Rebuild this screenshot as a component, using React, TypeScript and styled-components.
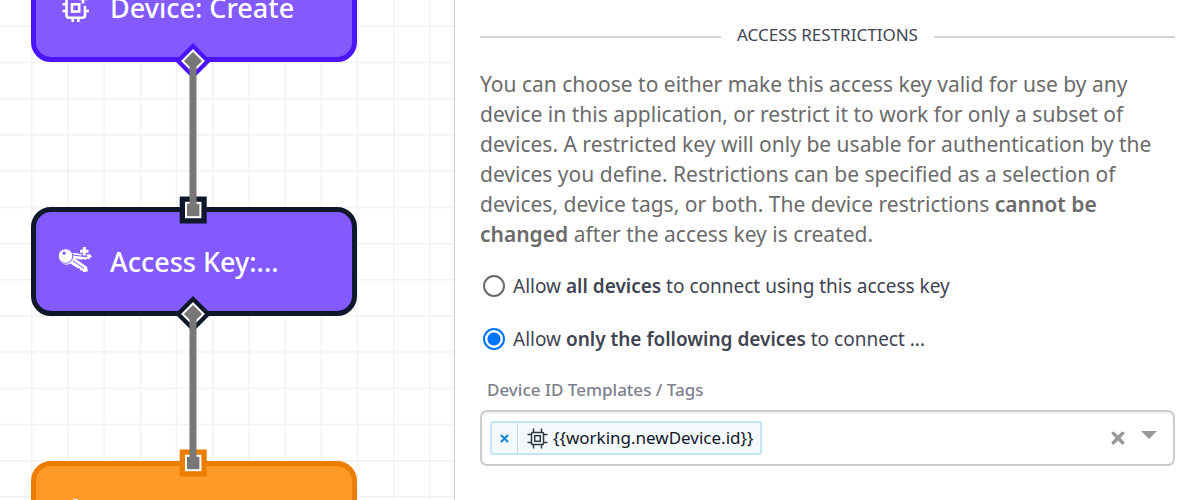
import React from "react";
import styled, { createGlobalStyle } from "styled-components";

const GlobalStyle = createGlobalStyle`
  * { box-sizing: border-box; }
  body { margin: 0; background: #fff; font-family: "Noto Sans", "Open Sans", sans-serif; color: #3f4452; }
  b { font-weight: 600; }
`;

const Layout = styled.div`
  display: flex;
  height: 100vh;
  overflow: hidden;
`;

const Canvas = styled.div`
  position: relative;
  flex: 0 0 455px;
  border-right: 1px solid #ccc;
  overflow: hidden;
`;

const Grid = styled.svg`
  position: absolute;
  inset: 0;
  width: 100%;
  height: 100%;
`;

const Node = styled.div<{ $top: number; $fill: string; $edge: string }>`
  position: absolute;
  left: 31px;
  top: ${(p) => p.$top}px;
  display: flex;
  align-items: center;
  width: 326px;
  height: 109px;
  padding: 0 22px;
  border: 5px solid ${(p) => p.$edge};
  border-radius: 20px;
  background: ${(p) => p.$fill};
  color: #fff;
`;

const NodeIcon = styled.svg`
  flex: none;
  width: 34px;
  height: 34px;
  margin-right: 18px;
`;

const NodeTitle = styled.span`
  font-size: 27px;
  font-weight: 500;
  line-height: 36px;
  white-space: nowrap;
`;

const Panel = styled.main`
  flex: 1;
  min-width: 0;
  padding: 20px 25px;
`;

const SectionTitle = styled.h2`
  display: flex;
  align-items: center;
  gap: 16px;
  margin: 0 0 19px;
  font-size: 17px;
  font-weight: 400;
  line-height: 30px;
  &::before,
  &::after {
    content: "";
    flex: 1;
    height: 2px;
    margin-top: 3px;
    background: #d4d4d6;
  }
`;

const Description = styled.p`
  margin: 0 0 22px;
  font-size: 21px;
  line-height: 30px;
  color: #6b6b6b;
`;

const Option = styled.label`
  display: flex;
  align-items: center;
  gap: 8px;
  height: 30px;
  margin-bottom: 23px;
  font-size: 19px;
  line-height: 30px;
`;

const Radio = styled.input`
  appearance: none;
  flex: none;
  width: 22px;
  height: 22px;
  margin: 0 0 0 3px;
  border: 2px solid #6b6b6b;
  border-radius: 50%;
  background: #fff;
  &:checked {
    border-color: #0075ff;
    background: radial-gradient(circle, #0075ff 6px, #fff 7px);
  }
`;

const FieldLabel = styled.label`
  display: block;
  margin: 0 0 7px 7px;
  font-size: 17px;
  font-weight: 500;
  line-height: 26px;
  color: #7c808c;
`;

const TagSelect = styled.div`
  display: flex;
  align-items: center;
  height: 56px;
  padding: 0 16px 0 8px;
  border: 2px solid #ccc;
  border-radius: 7px;
  box-shadow: inset 0 2px 2px #f2f2f2;
`;

const Tag = styled.span`
  display: flex;
  align-items: stretch;
  height: 34px;
  border: 2px solid #c2e4f4;
  border-radius: 3px;
  background: #f4f9fd;
  color: #111827;
`;

const TagRemove = styled.button`
  display: flex;
  align-items: center;
  justify-content: center;
  width: 26px;
  padding: 0;
  border: 0;
  border-right: 1px solid #c9d6df;
  background: none;
  color: #0a84dd;
`;

const TagText = styled.span`
  display: flex;
  align-items: center;
  gap: 5px;
  padding: 0 7px 0 9px;
  font-size: 17px;
  line-height: 30px;
`;

const TagInput = styled.input`
  flex: 1;
  min-width: 0;
  border: 0;
  outline: 0;
  background: none;
  font: inherit;
`;

const IconButton = styled.button`
  display: flex;
  align-items: center;
  justify-content: center;
  padding: 0;
  border: 0;
  background: none;
  color: #999;
  & + & { margin-left: 16px; }
`;

const Cross = ({ size, weight }: { size: number; weight: number }) => (
  <svg width={size} height={size} viewBox="0 0 12 12" fill="none" stroke="currentColor" strokeWidth={weight} strokeLinecap="round" aria-hidden="true">
    <path d="M2 2l8 8M10 2l-8 8" />
  </svg>
);

const TagChip = () => (
  <svg width="21" height="21" viewBox="0 0 21 21" fill="none" stroke="#333a48" strokeWidth="1.500" aria-hidden="true">
    <rect x="4.500" y="4.500" width="12" height="12" rx="0.800" />
    <rect x="7.700" y="7.700" width="5.600" height="5.600" />
    <path d="M6.500 .5v4M14.500 .5v4M6.500 16.500v4M14.500 16.500v4M.5 6.500h4M.5 14.500h4M16.500 6.500h4M16.500 14.500h4" />
  </svg>
);

const NodeChip = () => (
  <NodeIcon viewBox="0 0 34 34" fill="none" stroke="currentColor" strokeWidth="2.600" aria-hidden="true">
    <path d="M19 7.300H11a2.500 2.500 0 0 0-2.500 2.500v14.400a2.500 2.500 0 0 0 2.500 2.500h13.500a2.500 2.500 0 0 0 2.500-2.500V15" />
    <rect x="14" y="13.300" width="7.200" height="7.200" />
    <path d="M14.700 27v4M20.300 27v4M4.500 13.300h4M4.500 20h4M27 20h4M14.700 3v4" />
    <path d="M25 3.500v9M20.500 8h9" />
  </NodeIcon>
);

const NodeKeys = () => (
  <NodeIcon viewBox="0 0 34 34" fill="currentColor" aria-hidden="true">
    <path d="M12 7.800L32.500 9.500l1.300 2-3 2.800-2-.6-1.600 1.200-2-1-1.600.8-10-2z" />
    <path d="M14 9.900l15.500 2" stroke="#825aff" strokeWidth="1" />
    <path d="M10 12.500l2.500-2.300 16.500 11.600 1 4.500-4.500.9-1.500-1.900-1.800.2-.7-2.200-2-.1-9-6z" />
    <path d="M12.500 14l13.500 9.500" stroke="#825aff" strokeWidth="1" />
    <circle cx="8.500" cy="13.200" r="6.600" />
    <circle cx="7.500" cy="11" r="7.300" stroke="#825aff" strokeWidth="1" />
    <circle cx="6.200" cy="8.200" r="1.600" fill="#825aff" />
    <path d="M26.300 1.200v10M21.300 6.200h10" stroke="#825aff" strokeWidth="5" />
    <path d="M26.300 2v8.400M22.100 6.200h8.400" stroke="#fff" strokeWidth="3" />
  </NodeIcon>
);

const NodeBranch = () => (
  <NodeIcon viewBox="0 0 34 34" fill="none" stroke="currentColor" strokeWidth="2.600" aria-hidden="true">
    <circle cx="17.500" cy="3.800" r="2.600" />
    <path d="M17.500 7v8M7 27v-6l4-6h13l4 6v6z" />
  </NodeIcon>
);

const DiamondPort = ({ y, edge }: { y: number; edge: string }) => (
  <g>
    <path d={`M193 ${y - 18}l18 18-18 18-18-18z`} fill={edge} />
    <path d={`M193 ${y - 10.500}l10.500 10.500-10.500 10.500-10.500-10.500z`} fill="#777" stroke="#fff" strokeWidth="2" />
  </g>
);

const SquarePort = ({ y, edge }: { y: number; edge: string }) => (
  <g>
    <rect x="179.700" y={y - 13.500} width="27" height="27" fill={edge} />
    <rect x="186" y={y - 7.200} width="14.400" height="14.400" fill="#777" stroke="#fff" strokeWidth="2" />
  </g>
);

export default function App() {
  return (
    <>
      <GlobalStyle />
      <Layout>
        <Canvas>
          <Grid aria-hidden="true">
            <defs>
              <pattern id="grid" x="31" y="25.500" width="36.200" height="36.200" patternUnits="userSpaceOnUse">
                <path d="M0 .7H36.200M.7 0V36.200" stroke="#f1f1f1" strokeWidth="1.400" />
              </pattern>
            </defs>
            <rect width="100%" height="100%" fill="url(#grid)" />
          </Grid>
          <Node $top={-47} $fill="#825aff" $edge="#4b14fa">
            <NodeChip />
            <NodeTitle>Device: Create</NodeTitle>
          </Node>
          <Node $top={207} $fill="#825aff" $edge="#0f172a">
            <NodeKeys />
            <NodeTitle>Access Key:...</NodeTitle>
          </Node>
          <Node $top={461} $fill="#ff9a26" $edge="#eb7d00">
            <NodeBranch />
          </Node>
          <Grid aria-hidden="true">
            <DiamondPort y={61} edge="#4b14fa" />
            <SquarePort y={210} edge="#0f172a" />
            <DiamondPort y={314} edge="#0f172a" />
            <SquarePort y={463} edge="#eb7d00" />
            <path d="M193 61V210M193 314V463" stroke="#777" strokeWidth="7" />
          </Grid>
        </Canvas>
        <Panel>
          <SectionTitle>ACCESS RESTRICTIONS</SectionTitle>
          <Description>
            You can choose to either make this access key valid for use by any device in this application, or restrict
            it to work for only a subset of devices. A restricted key will only be usable for authentication by the
            devices you define. Restrictions can be specified as a selection of devices, device tags, or both. The
            device restrictions <b>cannot be changed</b> after the access key is created.
          </Description>
          <Option>
            <Radio type="radio" name="scope" />
            <span>Allow <b>all devices</b> to connect using this access key</span>
          </Option>
          <Option>
            <Radio type="radio" name="scope" defaultChecked />
            <span>Allow <b>only the following devices</b> to connect ...</span>
          </Option>
          <FieldLabel htmlFor="device-ids">Device ID Templates / Tags</FieldLabel>
          <TagSelect>
            <Tag>
              <TagRemove aria-label="Remove"><Cross size={9} weight={2.600} /></TagRemove>
              <TagText>
                <TagChip />
                {"{{working.newDevice.id}}"}
              </TagText>
            </Tag>
            <TagInput id="device-ids" />
            <IconButton aria-label="Clear all"><Cross size={14} weight={3} /></IconButton>
            <IconButton aria-label="Open list">
              <svg width="16" height="14" viewBox="0 0 16 14" fill="currentColor" aria-hidden="true"><path d="M0 0h16L8 8z" /></svg>
            </IconButton>
          </TagSelect>
        </Panel>
      </Layout>
    </>
  );
}
